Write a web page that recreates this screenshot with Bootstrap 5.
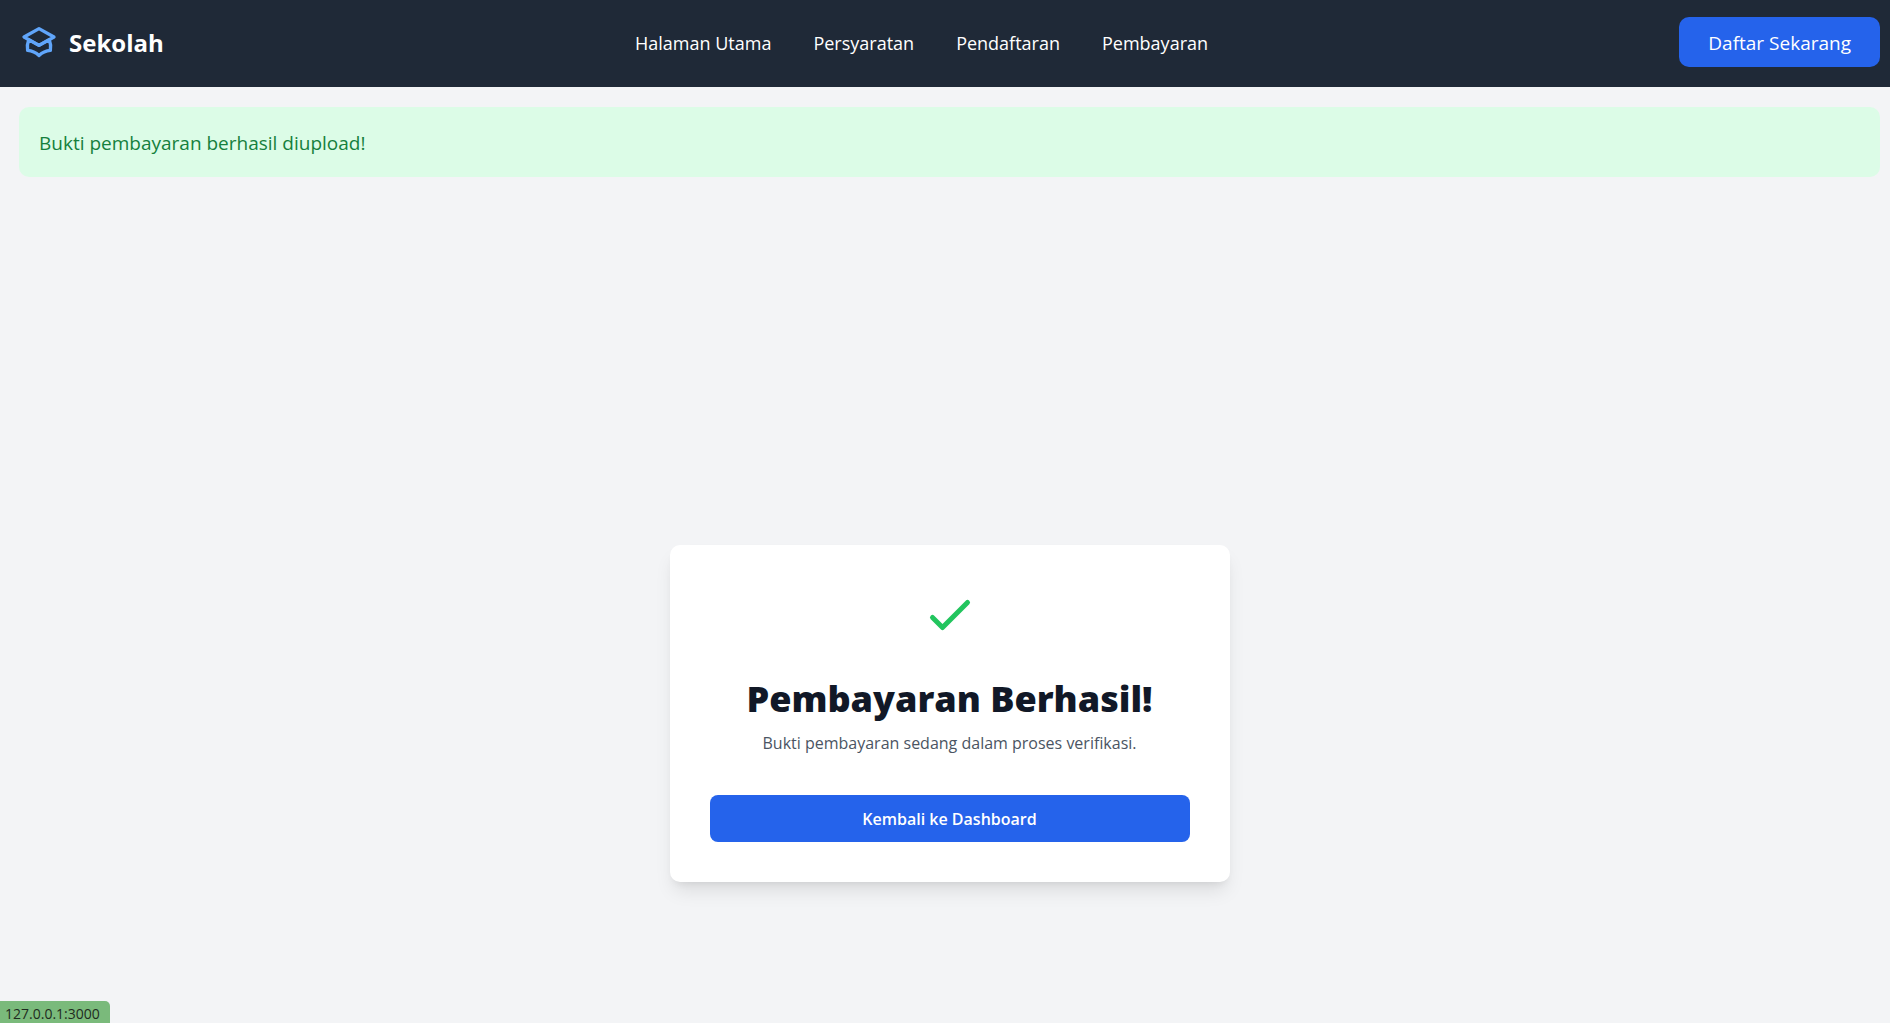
<!DOCTYPE html>
<html lang="id">
<head>
<meta charset="utf-8">
<meta name="viewport" content="width=device-width, initial-scale=1">
<title>Sekolah - Pembayaran Berhasil</title>
<link href="https://cdn.jsdelivr.net/npm/bootstrap@5.3.0/dist/css/bootstrap.min.css" rel="stylesheet">
<style>
  body { background: #f3f4f6; font-family: "Segoe UI", "Open Sans", "Noto Sans", sans-serif; font-size: 19px; line-height: 30px; }
  .site-nav { background: #1f2937; padding: 17px 10px 20px 19px; }
  .site-brand { font-size: 24px; font-weight: 700; line-height: 40px; color: #fff; gap: 10px; }
  .site-brand span { padding-top: 2px; }
  .site-brand svg { color: #60a5fa; }
  .site-links { gap: 0 42px; }
  .site-links .nav-link { color: #fff; font-size: 18px; padding: 2px 0 0; }
  .btn-blue { --bs-btn-color: #fff; --bs-btn-bg: #2563eb; --bs-btn-border-width: 0; --bs-btn-hover-color: #fff; --bs-btn-hover-bg: #1d4ed8; --bs-btn-active-color: #fff; --bs-btn-active-bg: #1d4ed8; }
  .btn-register { font-size: 19px; line-height: 30px; padding: 11px 29px 9px; border-radius: 10px; }
  .page-body { padding: 20px 10px 0 19px; }
  .alert-upload { background: #dcfce7; color: #15803d; padding: 21px 20px 19px; margin-bottom: 25px; border-radius: 10px; }
  .result-card { width: 100%; max-width: 560px; padding: 40px; border: 0; border-radius: 10px; box-shadow: 0 12px 19px -4px rgba(0,0,0,.1), 0 5px 8px -5px rgba(0,0,0,.1); }
  .result-card svg { color: #22c55e; }
  .result-title { font-size: 36px; font-weight: 800; line-height: 45px; color: #111827; margin: 31px 0 10px; }
  .result-text { font-size: 16px; line-height: 25px; color: #4b5563; margin-bottom: 39px; }
  .btn-back { font-size: 16px; font-weight: 600; line-height: 25px; padding: 12px 20px 10px; border-radius: 8px; }
  .host-tag { background: #7aba7b; color: #1f2b20; font-size: 14px; line-height: 19px; padding: 3px 10px 0 5px; border-top-right-radius: 5px; }
</style>
</head>
<body>
<nav class="site-nav d-flex flex-wrap align-items-center justify-content-between">
  <a class="site-brand d-flex align-items-center text-decoration-none" href="#">
    <svg width="40" height="40" viewBox="0 0 24 24" fill="none" stroke="currentColor" stroke-width="2" stroke-linecap="round" stroke-linejoin="round" aria-hidden="true"><path d="M12 14l9-5-9-5-9 5 9 5z"/><path d="M12 14l6.16-3.422a12.083 12.083 0 01.665 6.479A11.952 11.952 0 0012 20.055a11.952 11.952 0 00-6.824-2.998 12.078 12.078 0 01.665-6.479L12 14z"/></svg>
    <span>Sekolah</span>
  </a>
  <div class="site-links nav">
    <a class="nav-link" href="#">Halaman Utama</a>
    <a class="nav-link" href="#">Persyaratan</a>
    <a class="nav-link" href="#">Pendaftaran</a>
    <a class="nav-link" href="#">Pembayaran</a>
  </div>
  <button type="button" class="btn btn-blue btn-register">Daftar Sekarang</button>
</nav>
<main class="page-body">
  <div class="alert alert-upload border-0" role="alert">Bukti pembayaran berhasil diupload!</div>
  <section class="min-vh-100 d-flex align-items-center justify-content-center">
    <div class="card result-card text-center">
      <svg class="mx-auto" width="60" height="60" viewBox="0 0 24 24" fill="none" stroke="currentColor" stroke-width="2" stroke-linecap="round" stroke-linejoin="round" aria-hidden="true"><path d="M5 13l4 4L19 7"/></svg>
      <h1 class="result-title">Pembayaran Berhasil!</h1>
      <p class="result-text">Bukti pembayaran sedang dalam proses verifikasi.</p>
      <button type="button" class="btn btn-blue btn-back w-100">Kembali ke Dashboard</button>
    </div>
  </section>
</main>
<div class="host-tag position-fixed bottom-0 start-0">127.0.0.1:3000</div>
<script src="https://cdn.jsdelivr.net/npm/bootstrap@5.3.0/dist/js/bootstrap.bundle.min.js"></script>
</body>
</html>
